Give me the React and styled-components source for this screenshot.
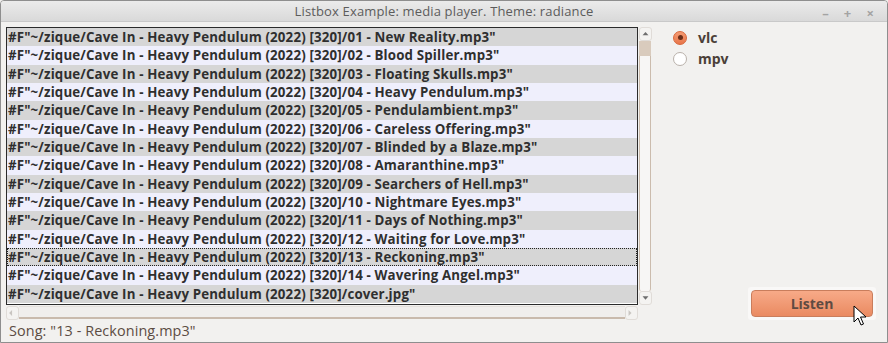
import React from 'react'
import styled, { createGlobalStyle } from 'styled-components'

const GlobalStyle = createGlobalStyle`
  html, body {
    margin: 0;
    padding: 0;
    background: #f2f1ef;
  }
  * { box-sizing: border-box; }
`

const Window = styled.div`
  position: relative;
  width: 888px;
  height: 343px;
  border: 1px solid #8e8e8e;
  border-radius: 4px 4px 0 0;
  background: #f2f1ef;
  display: flex;
  flex-direction: column;
  font-family: "Open Sans", "DejaVu Sans", sans-serif;
  overflow: hidden;
`

const TitleBar = styled.div`
  height: 21px;
  flex: none;
  display: flex;
  align-items: center;
  justify-content: center;
  position: relative;
  background: linear-gradient(#ebebeb, #d9d9d9);
  border-bottom: 1px solid #c9c9c9;
  color: #5c5c5c;
  font-size: 13px;
  letter-spacing: 0.15px;
`

const WinButtons = styled.div`
  position: absolute;
  right: 13px;
  top: 3px;
  display: flex;
  gap: 15px;
  color: #a3a3a3;
  font-size: 13px;
  font-weight: 700;
`

const Body = styled.div`
  flex: 1;
  display: flex;
  padding: 5px 11px 0 5px;
`

const LeftCol = styled.div`
  display: flex;
  flex-direction: column;
  width: 647px;
`

const ListGrid = styled.div`
  display: grid;
  grid-template-columns: 632px 14px;
  grid-template-rows: 278px 14px;
`

const ListBox = styled.div`
  border: 1px solid #2b2b2b;
  background: #ffffff;
  overflow: hidden;
  display: flex;
  flex-direction: column;
`

const Row = styled.div`
  height: 18.33px;
  line-height: 18px;
  padding-left: 1px;
  white-space: nowrap;
  font-size: 13.3px;
  font-weight: 700;
  color: #2f2f2f;
  letter-spacing: 0.15px;
  background: ${p => (p.$odd ? '#efeffc' : '#d6d6d6')};
  outline: ${p => (p.$focus ? '1px dotted #222' : 'none')};
  outline-offset: -1px;
`

const VScroll = styled.div`
  display: flex;
  flex-direction: column;
  padding-left: 1px;
`

const Arrow = styled.div`
  width: 13px;
  height: 14px;
  flex: none;
  border-radius: 3px;
  background: #f4f3f1;
  border: 1px solid #e0dcd8;
  display: flex;
  align-items: center;
  justify-content: center;
`

const Thumb = styled.div`
  height: 15px;
  flex: none;
  background: #d9cbbd;
  margin-right: 1px;
`

const VTrough = styled.div`
  flex: 1;
  border-left: 1px solid #cbbcad;
  border-right: 1px solid #cbbcad;
  background: #f7f6f5;
  margin-right: 1px;
  border-radius: 0 0 2px 2px;
`

const HScroll = styled.div`
  display: flex;
  padding-top: 1px;
`

const HTrough = styled.div`
  flex: 1;
  border-top: 1px solid #e4e0dc;
  border-bottom: 2px solid #c9baac;
  background: #f0eeec;
`

const Status = styled.div`
  margin-top: 2px;
  padding-left: 3px;
  font-size: 14.4px;
  color: #5c4c43;
  letter-spacing: 0.1px;
`

const RightCol = styled.div`
  flex: 1;
  display: flex;
  flex-direction: column;
  align-items: flex-end;
`

const Radios = styled.div`
  align-self: stretch;
  padding-left: 20px;
  display: flex;
  flex-direction: column;
`

const RadioRow = styled.label`
  display: flex;
  align-items: center;
  gap: 11px;
  height: 21px;
  font-size: 14px;
  font-weight: 700;
  color: #4b3f38;
`

const RadioDot = styled.span`
  width: 14px;
  height: 14px;
  border-radius: 50%;
  flex: none;
  display: flex;
  align-items: center;
  justify-content: center;
  border: 1px solid ${p => (p.$on ? '#d8673a' : '#b9b1aa')};
  background: ${p => (p.$on ? 'linear-gradient(#f49a72, #e8764a)' : '#ffffff')};
  &::after {
    content: '';
    width: 5px;
    height: 5px;
    border-radius: 50%;
    background: ${p => (p.$on ? '#6b2e18' : 'transparent')};
  }
`

const ButtonWrap = styled.div`
  margin-top: auto;
  margin-bottom: 22px;
  padding: 3px;
  background: #f9f8f7;
  border-radius: 3px;
`

const Button = styled.button`
  width: 122px;
  height: 27px;
  border: 1px solid #c97d5c;
  border-radius: 4px;
  background: linear-gradient(#f7aa88, #ea8a61);
  color: #5f4b42;
  font-family: "Open Sans", "DejaVu Sans", sans-serif;
  font-size: 14px;
  font-weight: 700;
  padding: 0;
`

const Cursor = styled.svg`
  position: absolute;
  left: 852px;
  top: 304px;
`

const tracks = [
  '01 - New Reality.mp3',
  '02 - Blood Spiller.mp3',
  '03 - Floating Skulls.mp3',
  '04 - Heavy Pendulum.mp3',
  '05 - Pendulambient.mp3',
  '06 - Careless Offering.mp3',
  '07 - Blinded by a Blaze.mp3',
  '08 - Amaranthine.mp3',
  '09 - Searchers of Hell.mp3',
  '10 - Nightmare Eyes.mp3',
  '11 - Days of Nothing.mp3',
  '12 - Waiting for Love.mp3',
  '13 - Reckoning.mp3',
  '14 - Wavering Angel.mp3',
  'cover.jpg',
]

const ArrowIcon = ({ dir }) => {
  const pts = {
    up: '3,6.5 6.5,2.5 10,6.5',
    down: '3,3 10,3 6.5,7',
    left: '6,1.5 6,8.5 2.5,5',
    right: '3,1.5 3,8.5 6.5,5',
  }[dir]
  return (
    <svg width="13" height="10" viewBox="0 0 13 10">
      <polygon points={pts} fill={dir === 'up' || dir === 'down' ? '#6e6e6e' : '#c9c5c1'} />
    </svg>
  )
}

const App = () => {
  return (
    <>
      <GlobalStyle />
      <Window>
        <TitleBar>
          Listbox Example: media player. Theme: radiance
          <WinButtons>
            <span>–</span>
            <span>+</span>
            <span>×</span>
          </WinButtons>
        </TitleBar>
        <Body>
          <LeftCol>
            <ListGrid>
              <ListBox>
                {tracks.map((t, i) => (
                  <Row key={t} $odd={i % 2 === 1} $focus={i === 12}>
                    {`#F"~/zique/Cave In - Heavy Pendulum (2022) [320]/${t}"`}
                  </Row>
                ))}
              </ListBox>
              <VScroll>
                <Arrow><ArrowIcon dir="up" /></Arrow>
                <Thumb />
                <VTrough />
                <Arrow><ArrowIcon dir="down" /></Arrow>
              </VScroll>
              <HScroll>
                <Arrow><ArrowIcon dir="left" /></Arrow>
                <HTrough />
                <Arrow><ArrowIcon dir="right" /></Arrow>
              </HScroll>
            </ListGrid>
            <Status>Song: "13 - Reckoning.mp3"</Status>
          </LeftCol>
          <RightCol>
            <Radios>
              <RadioRow><RadioDot $on />vlc</RadioRow>
              <RadioRow><RadioDot />mpv</RadioRow>
            </Radios>
            <ButtonWrap>
              <Button>Listen</Button>
            </ButtonWrap>
          </RightCol>
        </Body>
        <Cursor width="14" height="22" viewBox="0 0 14 22">
          <path d="M1 1 L1 17 L5 13 L8 20 L10.5 19 L7.5 12 L13 12 Z" fill="#fff" stroke="#000" strokeWidth="1" strokeLinejoin="round" />
        </Cursor>
      </Window>
    </>
  )
}

export default App
